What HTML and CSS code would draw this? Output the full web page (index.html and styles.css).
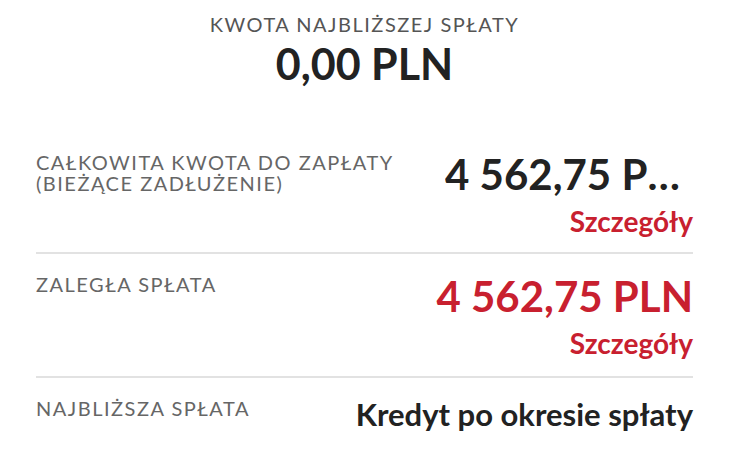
FILE: index.html
```html
<!DOCTYPE html>
<html lang="pl">
<head>
    <meta charset="UTF-8">
    <meta name="viewport" content="width=device-width, initial-scale=1.0">
    <title>Kredyt</title>
    <link rel="stylesheet" href="styles.css">
</head>
<body>
    <div class="summary">
        <div class="summary-title">KWOTA NAJBLIŻSZEJ SPŁATY</div>
        <div class="summary-amount">0,00 PLN</div>
    </div>
    <div class="list">
        <div class="row first">
            <div class="label">CAŁKOWITA KWOTA DO ZAPŁATY<br>(BIEŻĄCE ZADŁUŻENIE)</div>
            <div class="side clip">
                <div class="amount">4 562,75 PLN</div>
                <a class="details" href="#">Szczegóły</a>
            </div>
        </div>
        <div class="row">
            <div class="label">ZALEGŁA SPŁATA</div>
            <div class="side">
                <div class="amount red">4 562,75 PLN</div>
                <a class="details" href="#">Szczegóły</a>
            </div>
        </div>
        <div class="row last">
            <div class="label">NAJBLIŻSZA SPŁATA</div>
            <div class="side">
                <div class="amount small">Kredyt po okresie spłaty</div>
            </div>
        </div>
    </div>
</body>
</html>
```

FILE: styles.css
```css
body{
    margin: 0;
    padding: 12px 37px 0 36px;
    background-color: #fff;
    font-family: Lato, "Open Sans", sans-serif;
    color: #222;
}
.summary{
    display: flex;
    flex-direction: column;
    align-items: center;
    gap: 4px;
}
.summary-title{
    font-size: 20px;
    line-height: 24px;
    letter-spacing: 1.5px;
    color: #555;
}
.summary-amount{
    font-size: 43px;
    line-height: 48px;
    font-weight: 700;
}
.list{
    margin-top: 62px;
}
.row{
    display: flex;
    justify-content: space-between;
    gap: 30px;
    padding: 18px 0 17px;
    border-bottom: 2px solid #e2e2e2;
}
.row.first{
    padding-top: 0;
    padding-bottom: 15px;
}
.row.last{
    border-bottom: none;
}
.label{
    padding-top: 2px;
    font-size: 20px;
    line-height: 21px;
    letter-spacing: 1.5px;
    color: #666;
}
.side{
    display: flex;
    flex-direction: column;
    align-items: flex-end;
    gap: 9px;
    min-width: 0;
}
.side.clip{
    width: 248px;
    flex-shrink: 0;
}
.amount{
    margin-top: 2px;
    font-size: 42px;
    line-height: 44px;
    font-weight: 700;
    white-space: nowrap;
}
.clip .amount{
    max-width: 100%;
    overflow: hidden;
    text-overflow: ellipsis;
}
.amount.red{
    color: #c8202f;
}
.amount.small{
    margin-top: 0;
    font-size: 31px;
    line-height: 36px;
}
.details{
    font-size: 28px;
    line-height: 32px;
    font-weight: 700;
    color: #c8202f;
    text-decoration: none;
}
```
